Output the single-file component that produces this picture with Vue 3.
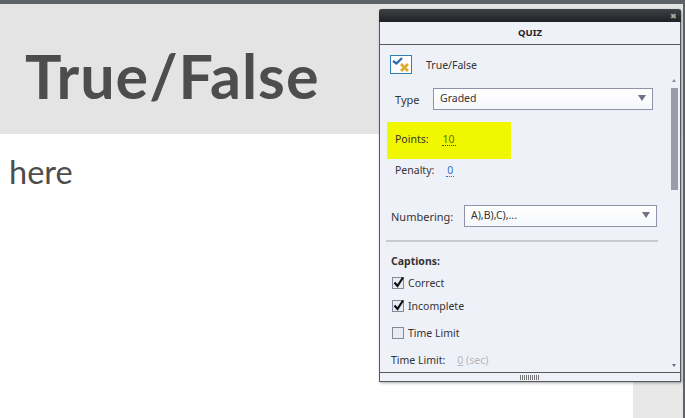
<template>
  <div class="page">
    <div class="topbar"></div>
    <header class="banner">
      <h1>True/False</h1>
    </header>
    <div class="content">
      <p class="body-text">here</p>
      <div class="side-strip"></div>
    </div>

    <aside class="panel">
      <div class="titlebar"><span class="close">✖</span></div>
      <div class="tab">QUIZ</div>
      <div class="panel-body">
        <div class="form">
          <div class="kind">
            <svg class="kind-icon" width="22" height="19" viewBox="0 0 22 19">
              <rect x="0.5" y="0.5" width="21" height="18" fill="#fff" stroke="#2f7fb5" />
              <path d="M3 6 L6.5 8.5 L12 3" fill="none" stroke="#2c6fb0" stroke-width="2.4" />
              <path d="M11 9 L18 16 M18 9 L11 16" fill="none" stroke="#e3a92c" stroke-width="2.8" />
            </svg>
            <span>True/False</span>
          </div>
          <div class="type-row">
            <label>Type</label>
            <div class="select type-select">
              <span>Graded</span><i class="arrow"></i>
            </div>
          </div>
          <div class="points-row highlight">
            <span>Points:</span><span class="value lime">10</span>
          </div>
          <div class="points-row penalty">
            <span>Penalty:</span><span class="value blue">0</span>
          </div>
          <div class="numbering-row">
            <label>Numbering:</label>
            <div class="select num-select">
              <span>A),B),C),...</span><i class="arrow"></i>
            </div>
          </div>
          <hr />
          <div class="captions">Captions:</div>
          <label v-for="c in checks" :key="c.label" class="check" :class="c.cls">
            <span class="box">
              <svg v-if="c.on" width="13" height="13" viewBox="0 0 13 13">
                <path d="M2.5 6.5 L5.5 10 L11 1.5" fill="none" stroke="#111" stroke-width="2.2" />
              </svg>
            </span>
            {{ c.label }}
          </label>
          <div class="time-row">
            <span>Time Limit:</span><span class="muted"><u>0</u> (sec)</span>
          </div>
        </div>
        <div class="scroll">
          <i class="up"></i>
          <div class="thumb"></div>
          <i class="down"></i>
        </div>
      </div>
      <div class="grip"><span></span></div>
    </aside>
  </div>
</template>

<script setup>
const checks = [
  { label: 'Correct', on: true, cls: 'c1' },
  { label: 'Incomplete', on: true, cls: 'c2' },
  { label: 'Time Limit', on: false, cls: 'c3' }
]
</script>

<style>
html, body { margin: 0; background: #fff; overflow: hidden; }
</style>

<style scoped>
.page {
  position: relative;
  width: 685px;
  height: 418px;
  overflow: hidden;
  display: flex;
  flex-direction: column;
  font-family: "Noto Sans", sans-serif;
  border-right: 2px solid #5f6368;
  box-sizing: border-box;
}
.topbar { height: 4px; background: #5f6368; flex: none; }
.banner {
  height: 130px;
  flex: none;
  box-sizing: border-box;
  background: #e4e4e4;
  display: flex;
  align-items: center;
  padding: 12px 0 0 25px;
}
h1 {
  margin: 0;
  font-family: "Lato", sans-serif;
  font-size: 61px;
  font-weight: 700;
  letter-spacing: 1px;
  color: #4d4d4d;
  line-height: 1;
}
.content { flex: 1; display: flex; justify-content: space-between; }
.body-text {
  margin: 18px 0 0 9px;
  font-family: "Lato", sans-serif;
  font-size: 32.5px;
  line-height: 40px;
  color: #4d4d4d;
}
.side-strip { width: 50px; background: #e8e8e8; }

.panel {
  position: absolute;
  left: 379px;
  top: 9px;
  width: 302px;
  height: 373px;
  box-sizing: border-box;
  border: 1px solid #55585e;
  border-top: none;
  border-radius: 3px 3px 0 0;
  background: #eff1f9;
  box-shadow: 1px 1px 3px rgba(0, 0, 0, 0.35);
  display: flex;
  flex-direction: column;
  font-size: 10.5px;
  color: #333;
}
.titlebar {
  height: 13px;
  background: linear-gradient(#3f4246, #1f2124);
  border-radius: 3px 3px 0 0;
  margin: 0 -1px;
  display: flex;
  justify-content: flex-end;
  align-items: center;
  padding-right: 4px;
  flex: none;
}
.close { font-size: 8px; color: #a9abad; line-height: 1; }
.tab {
  height: 22px;
  line-height: 22px;
  text-align: center;
  font-weight: 700;
  font-size: 9.5px;
  color: #222;
  border-bottom: 1px solid #55585e;
  flex: none;
}
.panel-body { flex: 1; display: flex; min-height: 0; }
.form { flex: 1; min-width: 0; position: relative; }
.kind {
  display: flex;
  align-items: center;
  gap: 14px;
  margin: 10px 0 0 10px;
  height: 19px;
}
.type-row {
  display: flex;
  align-items: center;
  margin: 14px 0 0 15px;
  height: 22px;
}
.type-row label { width: 38px; font-size: 11px; }
.select {
  height: 22px;
  box-sizing: border-box;
  border: 1px solid #8f92a8;
  background: linear-gradient(#ffffff, #f6f7fb);
  display: flex;
  align-items: center;
  justify-content: space-between;
  padding: 0 6px 2px;
}
.type-select { width: 220px; }
.num-select { width: 193px; padding-left: 6px; }
.arrow {
  width: 0;
  height: 0;
  border-left: 4px solid transparent;
  border-right: 4px solid transparent;
  border-top: 6px solid #6f7285;
}
.points-row {
  display: flex;
  align-items: center;
  gap: 13px;
  height: 37px;
  margin: 12px 0 0 7px;
  padding: 0 0 3px 8px;
  width: 124px;
  box-sizing: border-box;
}
.highlight { background: #f1f700; }
.penalty { height: 22px; margin-top: 0; gap: 12px; padding-bottom: 0; }
.value { border-bottom: 1px dotted; line-height: 12px; padding: 0 1px; }
.lime { color: #5c7a00; border-color: #3c5a00; }
.blue { color: #2f72c4; }
.numbering-row {
  display: flex;
  align-items: center;
  margin: 24px 0 0 11px;
  height: 22px;
}
.numbering-row label { width: 73px; font-size: 11px; }
hr {
  border: none;
  height: 2px;
  background: #c8cad2;
  margin: 13px 0 0 6px;
  width: 272px;
}
.captions { font-weight: 700; margin: 12px 0 0 11px; line-height: 14px; }
.check {
  display: flex;
  align-items: center;
  gap: 4px;
  margin-left: 12px;
  height: 14px;
}
.c1 { margin-top: 8px; }
.c2 { margin-top: 9px; }
.c3 { margin-top: 13px; }
.box {
  width: 10px;
  height: 10px;
  border: 1px solid #85889a;
  background: #e9eaf2;
  display: flex;
  align-items: center;
  justify-content: center;
}
.box svg { flex: none; margin-top: -1px; }
.time-row { display: flex; gap: 12px; margin: 13px 0 0 11px; line-height: 14px; }
.muted { color: #b5b7bf; }
.scroll {
  width: 12px;
  flex: none;
  position: relative;
  margin-right: 2px;
}
.thumb {
  position: absolute;
  top: 43px;
  left: 5px;
  width: 7px;
  height: 102px;
  background: #9a9cab;
}
.up, .down {
  position: absolute;
  left: 6px;
  width: 0;
  height: 0;
  border-left: 2.5px solid transparent;
  border-right: 2.5px solid transparent;
}
.up { top: 34px; border-bottom: 3px solid #8a8c98; }
.down { bottom: 5px; border-top: 3px solid #6d7080; }
.grip {
  height: 8px;
  border-top: 1px solid #55585e;
  flex: none;
  display: flex;
  justify-content: center;
  align-items: center;
}
.grip span {
  width: 20px;
  height: 5px;
  background: repeating-linear-gradient(90deg, #777 0 1px, transparent 1px 2px);
}
</style>
